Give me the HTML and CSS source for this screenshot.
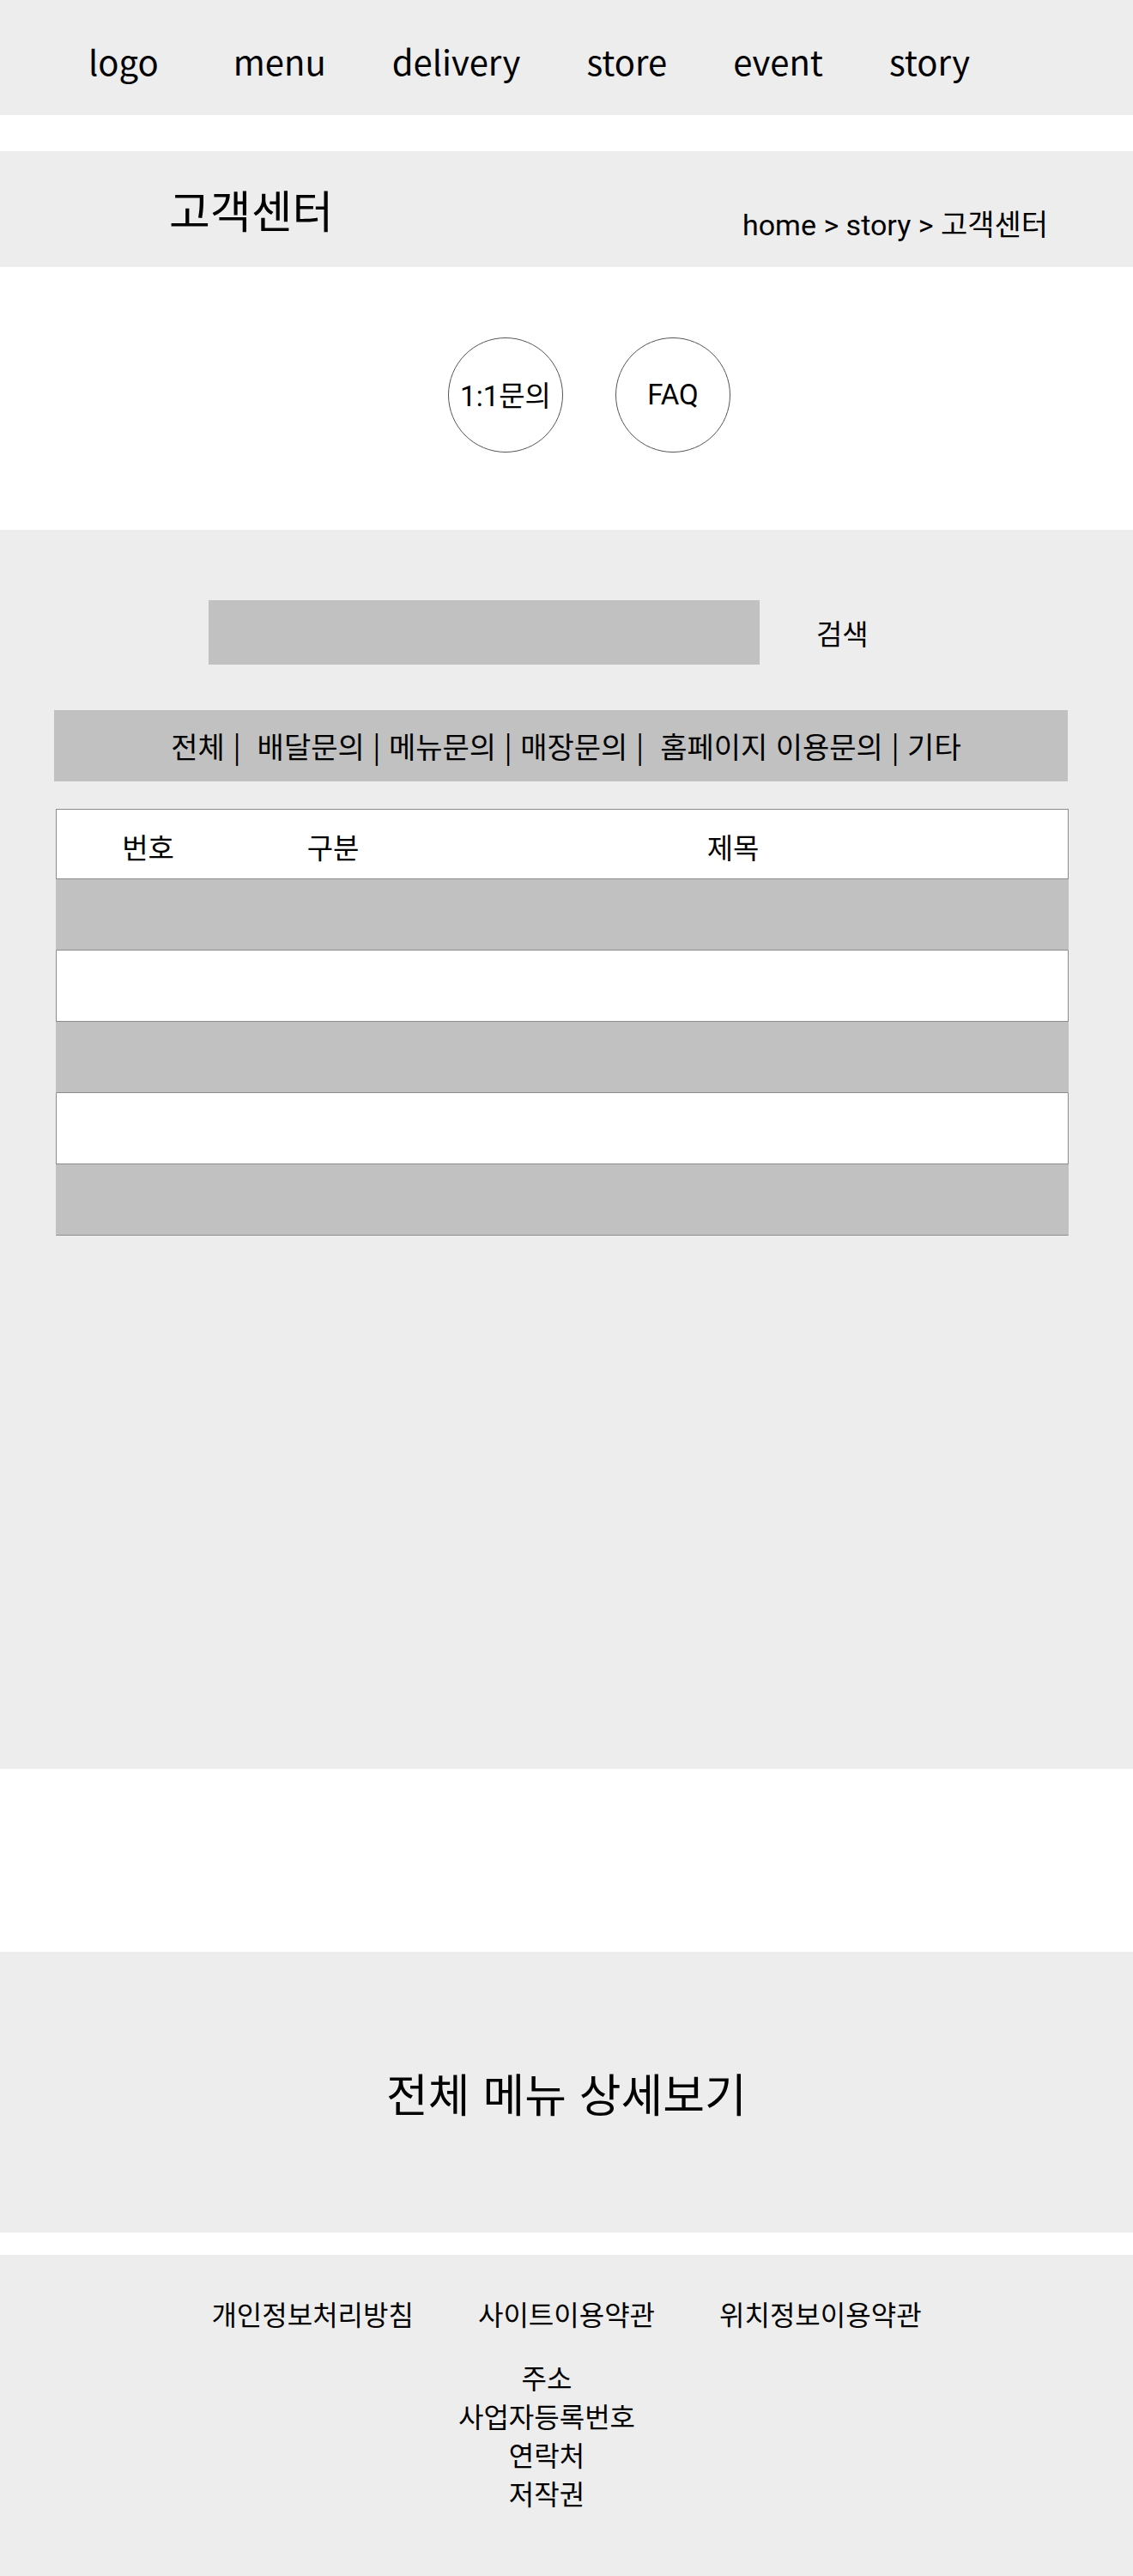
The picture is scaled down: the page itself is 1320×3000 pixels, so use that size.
FILE: index.html
```html
<!DOCTYPE html>
<html lang="ko">
<head>
  <meta charset="UTF-8" />
  <meta name="viewport" content="width=device-width, initial-scale=1.0"/>
  <title>고객센터</title>
  <link rel="stylesheet" href="styles.css">
</head>
<body>

  <header class="header">
    <nav class="gnb">
      <a class="logo">logo</a>
      <a>menu</a>
      <a>delivery</a>
      <a>store</a>
      <a>event</a>
      <a>story</a>
    </nav>
  </header>

  <div class="sub-top">
    <h1 class="sub-title">고객센터</h1>
    <p class="breadcrumb">home &gt; story &gt; 고객센터</p>
  </div>

  <section class="tabs">
    <a class="circle">1:1문의</a>
    <a class="circle">FAQ</a>
  </section>

  <section class="board">
    <div class="search">
      <div class="search-input"></div>
      <span class="search-btn">검색</span>
    </div>

    <div class="category">전체 |&nbsp; 배달문의 | 메뉴문의 | 매장문의 |&nbsp; 홈페이지 이용문의 | 기타</div>

    <div class="list">
      <div class="row head">
        <span>번호</span>
        <span>구분</span>
        <span>제목</span>
        <span></span>
      </div>
      <div class="row gray"></div>
      <div class="row"></div>
      <div class="row gray"></div>
      <div class="row"></div>
      <div class="row gray"></div>
    </div>
  </section>

  <section class="blank"></section>

  <section class="all-menu">
    <p>전체 메뉴 상세보기</p>
  </section>

  <footer class="footer">
    <ul class="policy">
      <li>개인정보처리방침</li>
      <li>사이트이용약관</li>
      <li>위치정보이용약관</li>
    </ul>
    <address class="info">
      주소<br>
      사업자등록번호<br>
      연락처<br>
      저작권
    </address>
  </footer>

</body>
</html>
```

FILE: styles.css
```css
/* ─── Reset & Body ───────────────────────────────────────────────────────── */
* { box-sizing: border-box; margin: 0; padding: 0; }
body {
  background: #fff;
  color: #000;
  font-family: "Noto Sans CJK KR", sans-serif;
}
a { color: inherit; text-decoration: none; }
ul { list-style: none; }

/* ─── Header ─────────────────────────────────────────────────────────────── */
.header {
  height: 134px;
  background: #ededed;
  display: flex;
  align-items: center;
  padding: 7px 0 0 103px;
}
.gnb {
  display: flex;
  gap: 77px;
  font-size: 40px;
}
.gnb .logo { margin-right: 10px; }

/* ─── Sub Top ────────────────────────────────────────────────────────────── */
.sub-top {
  margin-top: 42px;
  height: 135px;
  background: #ededed;
  display: flex;
  justify-content: space-between;
  align-items: center;
  padding: 0 99px 0 197px;
}
.sub-title {
  font-size: 52px;
  font-weight: 400;
}
.breadcrumb {
  align-self: flex-end;
  margin-bottom: 27px;
  font-family: Roboto, "Noto Sans CJK KR", sans-serif;
  font-size: 34px;
}

/* ─── Tabs ───────────────────────────────────────────────────────────────── */
.tabs {
  height: 306px;
  display: flex;
  justify-content: center;
  align-items: center;
  gap: 61px;
  padding: 0 0 8px 53px;
}
.circle {
  width: 134px;
  height: 134px;
  border: 1px solid #555;
  border-radius: 50%;
  display: flex;
  align-items: center;
  justify-content: center;
  padding-bottom: 2px;
  font-family: Roboto, "Noto Sans CJK KR", sans-serif;
  font-size: 33px;
}

/* ─── Board ──────────────────────────────────────────────────────────────── */
.board {
  height: 1443px;
  background: #ededed;
  padding-top: 82px;
}
.search {
  display: flex;
  align-items: center;
  padding-left: 243px;
  gap: 66px;
}
.search-input {
  width: 642px;
  height: 75px;
  background: #c1c1c1;
}
.search-btn { font-size: 33px; }

.category {
  margin: 53px 0 0 63px;
  width: 1181px;
  height: 83px;
  background: #c1c1c1;
  display: flex;
  align-items: center;
  justify-content: center;
  padding-left: 12px;
  font-size: 34px;
  white-space: pre;
}

.list {
  margin: 32px 0 0 65px;
  width: 1180px;
}
.row {
  height: 83px;
  background: #fff;
  border: 1px solid #8c8c8c;
  border-top: 0;
  display: grid;
  grid-template-columns: 213px 218px 714px 1fr;
  align-items: center;
  text-align: center;
  font-size: 33px;
}
.row.head { border-top: 1px solid #8c8c8c; height: 82px; padding-top: 6px; }
.row.gray { background: #c1c1c1; border-color: #c1c1c1 #c1c1c1 #8c8c8c; }

/* ─── Blank / All Menu ───────────────────────────────────────────────────── */
.blank { height: 213px; }
.all-menu {
  height: 327px;
  background: #ededed;
  display: flex;
  align-items: center;
  justify-content: center;
  font-size: 53px;
}

/* ─── Footer ─────────────────────────────────────────────────────────────── */
.footer {
  margin-top: 26px;
  height: 374px;
  background: #ededed;
  padding-top: 46px;
  font-size: 32px;
  line-height: 45px;
  text-align: center;
}
.policy {
  display: flex;
  justify-content: center;
  gap: 75px;
}
.info {
  margin-top: 29px;
  font-style: normal;
  padding-right: 46px;
}
```
